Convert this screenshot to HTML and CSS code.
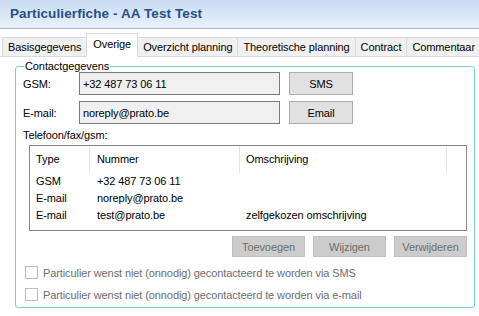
FILE: index.html
```html
<!DOCTYPE html>
<html lang="nl">
<head>
    <meta charset="UTF-8">
    <title>Particulierfiche</title>
    <link rel="stylesheet" href="styles.css">
</head>
<body>

    <div class="titlebar">Particulierfiche - AA Test Test</div>

    <div class="tabs">
        <div class="tab">Basisgegevens</div>
        <div class="tab active">Overige</div>
        <div class="tab">Overzicht planning</div>
        <div class="tab">Theoretische planning</div>
        <div class="tab">Contract</div>
        <div class="tab">Commentaar</div>
    </div>

    <fieldset class="contact">
        <legend>Contactgegevens</legend>

        <div class="row">
            <label class="lbl">GSM:</label>
            <input type="text" class="field" value="+32 487 73 06 11" readonly>
            <button class="btn">SMS</button>
        </div>
        <div class="row">
            <label class="lbl">E-mail:</label>
            <input type="text" class="field" value="noreply@prato.be" readonly>
            <button class="btn">Email</button>
        </div>

        <div class="list-title">Telefoon/fax/gsm:</div>
        <div class="listbox">
            <div class="list-head">
                <span class="col-type">Type</span>
                <span class="col-nr">Nummer</span>
                <span class="col-desc">Omschrijving</span>
                <span class="col-rest"></span>
            </div>
            <div class="list-row">
                <span class="col-type">GSM</span>
                <span class="col-nr">+32 487 73 06 11</span>
                <span class="col-desc"></span>
            </div>
            <div class="list-row">
                <span class="col-type">E-mail</span>
                <span class="col-nr">noreply@prato.be</span>
                <span class="col-desc"></span>
            </div>
            <div class="list-row">
                <span class="col-type">E-mail</span>
                <span class="col-nr">test@prato.be</span>
                <span class="col-desc">zelfgekozen omschrijving</span>
            </div>
        </div>

        <div class="actions">
            <button class="btn disabled">Toevoegen</button>
            <button class="btn disabled">Wijzigen</button>
            <button class="btn disabled">Verwijderen</button>
        </div>

        <label class="check"><span class="box"></span>Particulier wenst niet (onnodig) gecontacteerd te worden via SMS</label>
        <label class="check"><span class="box"></span>Particulier wenst niet (onnodig) gecontacteerd te worden via e-mail</label>
    </fieldset>

</body>
</html>
```

FILE: styles.css
```css
body {
    margin: 0;
    width: 479px;
    height: 316px;
    overflow: hidden;
    background: #fff;
    font-family: 'Liberation Sans', Arial, sans-serif;
    font-size: 11px;
    letter-spacing: -0.1px;
    color: #000;
}

.titlebar {
    height: 28px;
    line-height: 27px;
    padding-left: 10px;
    background: linear-gradient(#c6d9f1, #ebf2fb);
    border-bottom: 1px solid #a9b6c6;
    font-size: 13.5px;
    font-weight: bold;
    letter-spacing: 0.1px;
    color: #264f88;
}

/* tabbladen */
.tabs {
    display: flex;
    align-items: flex-end;
    height: 23px;
    margin-top: 4px;
    padding-left: 2px;
    border-bottom: 1px solid #d9d9d9;
    white-space: nowrap;
}

.tab {
    flex-shrink: 0;
    height: 18px;
    line-height: 18px;
    padding: 0 5px;
    margin-right: -1px;
    background: #f0f0f0;
    border: 1px solid #d9d9d9;
    border-bottom: none;
}

.tab.active {
    height: 23px;
    line-height: 20px;
    padding: 0 6px;
    background: #fff;
    position: relative;
    margin-bottom: -1px;
    z-index: 1;
}

/* contactgegevens */
.contact {
    margin: 4px 7px 0 15px;
    padding: 0 7px 6px 7px;
    border: 1px solid #7ecbd6;
    border-radius: 3px;
}

.contact legend {
    padding: 0 1px;
    margin-left: 1px;
    line-height: 11px;
    font-size: 11px;
}

.row {
    display: flex;
    align-items: center;
}

.row + .row {
    margin-top: 6px;
}

.lbl {
    width: 56px;
}

.field {
    box-sizing: border-box;
    width: 201px;
    height: 23px;
    margin: 0 9px 0 0;
    padding: 0 3px;
    background: #f0f0f0;
    border: 1px solid #7a7a7a;
    font: inherit;
    letter-spacing: inherit;
    color: #000;
}

.btn {
    box-sizing: border-box;
    width: 64px;
    height: 23px;
    padding: 0;
    background: #e1e1e1;
    border: 1px solid #adadad;
    font: inherit;
    letter-spacing: inherit;
    color: #000;
}

.list-title {
    margin-top: 4px;
    height: 14px;
    line-height: 14px;
}

.listbox {
    box-sizing: border-box;
    height: 86px;
    margin: 3px 0 0 6px;
    width: 438px;
    border: 1px solid #828790;
}

.list-head,
.list-row {
    display: flex;
}

.list-head {
    height: 27px;
    line-height: 26px;
}

.list-head span {
    border-right: 1px solid #e5e5e5;
}

.list-row {
    height: 17px;
    line-height: 17px;
}

.col-type {
    box-sizing: border-box;
    width: 60px;
    padding-left: 6px;
}

.col-nr {
    box-sizing: border-box;
    width: 150px;
    padding-left: 7px;
}

.col-desc {
    box-sizing: border-box;
    width: 207px;
    padding-left: 6px;
}

.list-head .col-rest {
    border-right: none;
}

.actions {
    display: flex;
    justify-content: flex-end;
    gap: 8px;
    margin-top: 5px;
}

.btn.disabled {
    width: 73px;
    height: 21px;
    background: #cccccc;
    border-color: #bfbfbf;
    color: #6d6d6d;
}

.check {
    display: flex;
    align-items: center;
    height: 13px;
    margin-top: 9px;
    color: #6d6d6d;
}

.box {
    box-sizing: border-box;
    width: 13px;
    height: 13px;
    margin: 0 5px 0 2px;
    background: #fff;
    border: 1px solid #bcbcbc;
}
```
